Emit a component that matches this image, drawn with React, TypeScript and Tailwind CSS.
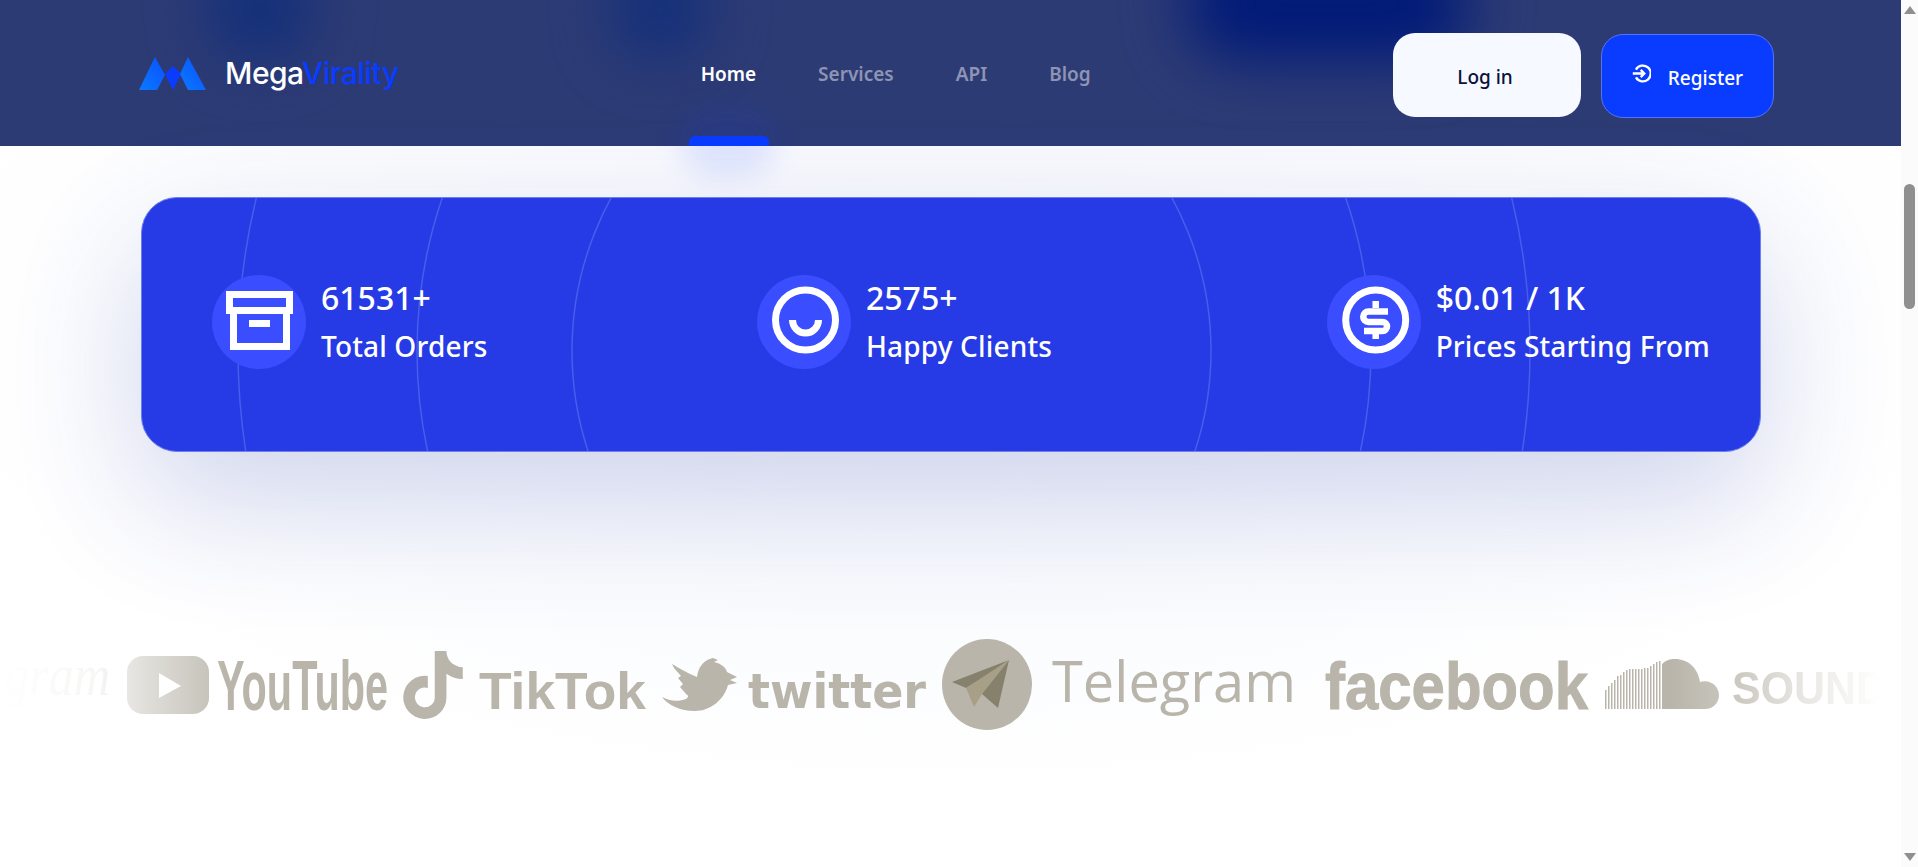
import { FaTiktok } from "react-icons/fa";

const sans = "font-['Noto_Sans',sans-serif]";

const Logo = () => (
    <a href="#" className="flex items-center">
        <svg width="67" height="33" viewBox="0 0 67 33">
            <defs>
                <linearGradient id="logoBlue" x1="0" y1="1" x2="1" y2="0">
                    <stop offset="0" stopColor="#0a7aff" />
                    <stop offset="1" stopColor="#0a50ff" />
                </linearGradient>
            </defs>
            <path d="M0 33 16 0 26 18 18 33Z" fill="url(#logoBlue)" />
            <path d="M34 9 26 17 34 33 42 17Z" fill="#0a3cff" />
            <path d="M49 0 67 33H49L41 17Z" fill="url(#logoBlue)" />
        </svg>
        <span className="ml-[19px] text-[30px] font-medium tracking-[-0.5px] font-['Inter',sans-serif] text-white">
            Mega<span className="text-[#0a3cff]">Virality</span>
        </span>
    </a>
);

const Nav = () => (
    <nav className={`${sans} ml-[302px] flex items-center gap-[62px] pt-[2px] text-[19px] font-semibold text-[#8d94b4]`}>
        <a href="#" className="text-white">Home</a>
        <a href="#">Services</a>
        <a href="#">API</a>
        <a href="#">Blog</a>
    </nav>
);

const Header = () => (
    <header className="relative flex h-[146px] shrink-0 items-center bg-[#2d3b75] pl-[139px]">
        <div className="absolute inset-0 overflow-hidden">
            <div className="absolute left-[205px] top-[-40px] h-[100px] w-[110px] rounded-full bg-[#14307a] blur-[28px]" />
            <div className="absolute left-[610px] top-[-40px] h-[100px] w-[100px] rounded-full bg-[#14307a] blur-[28px]" />
            <div className="absolute left-[1185px] top-[-50px] h-[110px] w-[285px] rounded-full bg-[#001a78] blur-[30px]" />
        </div>
        <div className="relative flex items-center">
            <Logo />
            <Nav />
        </div>
        <div className={`${sans} relative ml-auto mr-[127px] mt-[4px] flex items-center gap-[20px] text-[19px] font-medium`}>
            <button className="h-[84px] w-[188px] rounded-[22px] bg-[#f6f9ff] pr-[4px] pt-[4px] text-[#0b1239]">Log in</button>
            <button className="mt-[2px] flex h-[84px] w-[173px] items-center justify-center gap-[17px] rounded-[22px] border border-[#5573f5] bg-[#0a3cff] pt-[4px] text-white">
                <svg className="mb-[9px]" width="19" height="19" viewBox="0 0 24 24" fill="none" stroke="#fff" strokeWidth="3">
                    <path d="M5 7a10 10 0 1 1 0 10" />
                    <path d="M1 12H15M11 7.500l4.500 4.500-4.500 4.500" />
                </svg>
                Register
            </button>
        </div>
        <div className="absolute bottom-[-32px] left-[680px] h-[70px] w-[96px] rounded-full bg-[#0a3cff]/10 blur-[14px]" />
        <div className="absolute bottom-0 left-[689px] h-[10px] w-[80px] rounded-t-[6px] bg-[#0a3cff]" />
    </header>
);

const ArchiveIcon = () => (
    <svg width="94" height="94" viewBox="0 0 94 94" fill="none" stroke="#fff" strokeWidth="7">
        <rect x="17.5" y="19.5" width="60" height="16" />
        <path d="M21.5 37V71.5H74.5V37" />
        <path d="M37 48.5H58" />
    </svg>
);

const SmileIcon = () => (
    <svg width="94" height="94" viewBox="0 0 94 94" fill="none" stroke="#fff" strokeWidth="7">
        <circle cx="48.5" cy="45" r="30" />
        <path d="M35.5 45a13 13 0 0 0 26 0" />
    </svg>
);

const DollarIcon = () => (
    <svg width="94" height="94" viewBox="0 0 94 94" fill="none" stroke="#fff" strokeWidth="7">
        <circle cx="48.7" cy="45" r="30" />
        <path strokeWidth="6.500" d="M48.7 26v7M48.7 59v5M61 36.500H41.500a5.250 5.250 0 0 0 0 10.500h14a4.500 4.500 0 0 1 0 9H37" />
    </svg>
);

const stats = [
    { icon: <ArchiveIcon />, value: "61531+", label: "Total Orders", spacing: "" },
    { icon: <SmileIcon />, value: "2575+", label: "Happy Clients", spacing: "mr-[5px]" },
    { icon: <DollarIcon />, value: "$0.01 / 1K", label: "Prices Starting From", spacing: "" },
];

const StatsCard = () => (
    <section className="relative ml-[141px] mr-[140px] mt-[51px] flex h-[255px] items-center justify-between overflow-hidden rounded-[36px] border border-[#6c80ee] bg-[#263be5] pb-[5px] pl-[70px] pr-[50px] shadow-[0_50px_130px_rgba(40,62,170,0.2)]">
        <svg className="absolute left-0 top-0" width="1620" height="255" viewBox="141 197 1620 255" fill="none" stroke="#4a5cec" strokeWidth="1.500">
            <circle cx="890.500" cy="350" r="319.500" />
            <circle cx="893" cy="350" r="477" />
            <circle cx="883" cy="350" r="646" />
        </svg>
        {stats.map((stat) => (
            <div key={stat.label} className={`relative flex items-center gap-[15px] ${stat.spacing}`}>
                <div className="h-[94px] w-[94px] rounded-full bg-[#3a4dff]">{stat.icon}</div>
                <div className={`${sans} font-medium text-white`}>
                    <div className="text-[32px] leading-[48px]">{stat.value}</div>
                    <div className="text-[28px] leading-[48px] tracking-[0.15px]">{stat.label}</div>
                </div>
            </div>
        ))}
    </section>
);

const BARS = [
    [1605, 690], [1608, 686], [1611, 683], [1614, 680], [1617, 676], [1620, 675], [1623, 672], [1626, 670], [1629, 669],
    [1632, 669], [1635, 669], [1638, 669], [1641, 669], [1644, 668], [1647, 668], [1650, 666], [1653, 664], [1656, 662], [1659, 661],
];

const LogoStrip = () => (
    <div className="mt-[178px] h-[110px] [mask-image:linear-gradient(to_right,transparent_0,rgba(0,0,0,0.12)_100px,rgba(0,0,0,0.35)_130px,rgba(0,0,0,0.8)_209px,#000_225px,#000_1670px,rgba(0,0,0,0.75)_1735px,rgba(0,0,0,0.35)_1800px,transparent_1880px)]">
        <svg width="1901" height="110" viewBox="0 630 1901 110" fill="#b9b5aa">
            <text x="4" y="695" fontFamily="Liberation Serif, serif" fontStyle="italic" fontSize="60" textLength="106" lengthAdjust="spacingAndGlyphs">gram</text>

            <rect x="127" y="656" width="82" height="58" rx="16" />
            <path d="M159 673 181 686 159 698Z" fill="#fff" />
            <text transform="translate(217 710) scale(0.572 1)" fontFamily="Liberation Sans, sans-serif" fontWeight="700" fontSize="70" textLength="299" lengthAdjust="spacingAndGlyphs">YouTube</text>

            <FaTiktok x="399" y="651" size="68" color="#b9b5aa" />
            <text x="479" y="709" fontFamily="Liberation Sans, sans-serif" fontWeight="700" fontSize="52" textLength="167" lengthAdjust="spacingAndGlyphs">TikTok</text>

            <path d="M662 697C669 701 678 702 686 699 689 697 688 695 687 695L680 687 683 684 678 678 681 676 674 668 672 664C680 669 690 674 697 677 698 668 703 660 713 658L718 660 714 662C722 664 726 668 727 672L737 677 730 680 737 683 728 685C724 700 710 711 695 711 680 711 668 705 662 697Z" />
            <text x="748" y="708" fontFamily="DejaVu Sans, sans-serif" fontWeight="700" fontSize="48" textLength="178" lengthAdjust="spacingAndGlyphs">twitter</text>

            <ellipse cx="987" cy="684.500" rx="45" ry="45.500" />
            <path d="M1009 660 952 682 966 688 980 680Z" fill="#86816d" />
            <path d="M1009 660 966 688 974 707 982 694Z" fill="#a89f87" />
            <path d="M1009 660 982 694 998 708Z" fill="#86816d" />
            <text x="1052" y="702" fontFamily="Open Sans, sans-serif" fontSize="56" textLength="244" lengthAdjust="spacingAndGlyphs">Telegram</text>

            <text x="1325" y="709" fontFamily="Liberation Sans, sans-serif" fontWeight="700" fontSize="66" stroke="#b9b5aa" strokeWidth="1" textLength="263" lengthAdjust="spacingAndGlyphs">facebook</text>

            {BARS.map(([x, y]) => (
                <rect key={x} x={x} y={y} width="1.500" height={709 - y} />
            ))}
            <path d="M1662 709V664C1666 660 1670 659 1675 659 1688 659 1698 668 1700 682 1711 679 1719 687 1719 695 1719 703 1713 709 1705 709Z" />
            <text x="1732" y="704" fontFamily="Liberation Sans, sans-serif" fontWeight="700" fontSize="47" textLength="155" lengthAdjust="spacingAndGlyphs">SOUND</text>
        </svg>
    </div>
);

const FakeScrollbar = () => (
    <aside className="flex w-[17px] shrink-0 flex-col items-center bg-[#fbfbfb]">
        <div className="mt-[6px] h-0 w-0 border-x-[6px] border-b-[8px] border-x-transparent border-b-[#8f8f8f]" />
        <div className="mt-[170px] h-[125px] w-[11px] rounded-full bg-[#8f8f8f]" />
        <div className="mb-[6px] mt-auto h-0 w-0 border-x-[6px] border-t-[8px] border-x-transparent border-t-[#8f8f8f]" />
    </aside>
);

export default function App() {
    return (
        <div className="flex h-screen overflow-hidden bg-white">
            <main className="relative min-w-0 flex-1 bg-[radial-gradient(ellipse_1050px_470px_at_50%_320px,#f6f7fc_0%,#fbfcfe_70%,#ffffff_100%)]">
                <Header />
                <StatsCard />
                <LogoStrip />
            </main>
            <FakeScrollbar />
        </div>
    );
}
